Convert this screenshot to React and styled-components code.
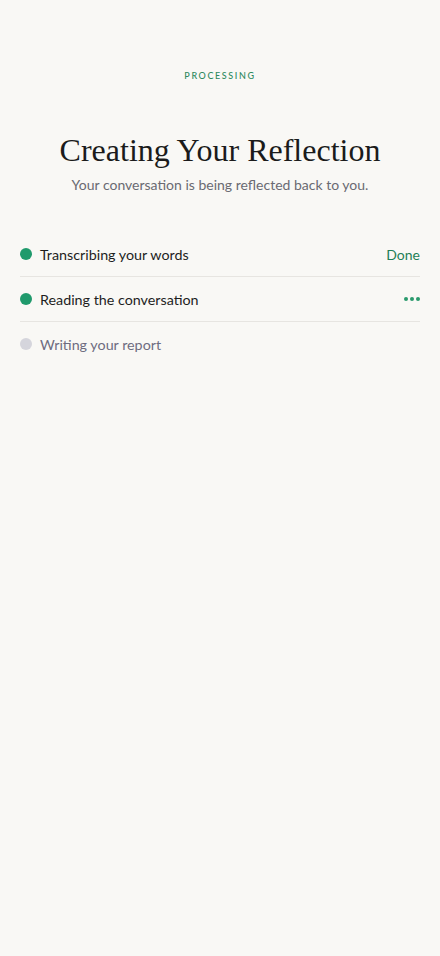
import React from "react";
import styled, { createGlobalStyle } from "styled-components";

const GlobalStyle = createGlobalStyle`
  html, body {
    margin: 0;
    padding: 0;
    background: #f9f8f5;
  }
  body {
    font-family: Lato, "Open Sans", sans-serif;
    -webkit-font-smoothing: antialiased;
  }
`;

const Page = styled.div`
  width: 440px;
  min-height: 956px;
  box-sizing: border-box;
  padding: 70px 20px 0;
  background: #f9f8f5;
`;

const Eyebrow = styled.div`
  text-align: center;
  font-size: 9px;
  line-height: 12px;
  letter-spacing: 1.6px;
  color: #2f8a60;
  font-weight: 500;
`;

const Title = styled.h1`
  margin: 49px 0 0;
  text-align: center;
  font-family: "Liberation Serif", "DejaVu Serif", serif;
  font-weight: 400;
  font-size: 32px;
  line-height: 38px;
  color: #1b1b1b;
`;

const Subtitle = styled.p`
  margin: 6px 0 0;
  text-align: center;
  font-size: 14px;
  line-height: 20px;
  color: #6a6a72;
`;

const Steps = styled.ul`
  list-style: none;
  margin: 37px 0 0;
  padding: 0;
`;

const Step = styled.li`
  display: flex;
  align-items: center;
  height: 45px;
  border-bottom: 1px solid ${(p) => (p.$last ? "transparent" : "#e7e5e1")};
  box-sizing: border-box;
`;

const Dot = styled.span`
  width: 12px;
  height: 12px;
  border-radius: 50%;
  background: ${(p) => (p.$active ? "#209a6c" : "#d5d5dc")};
  flex-shrink: 0;
`;

const Label = styled.span`
  margin-left: 8px;
  flex: 1;
  font-size: 14.3px;
  color: ${(p) => (p.$active ? "#1e1e1e" : "#6e6c80")};
`;

const Status = styled.span`
  font-size: 14px;
  color: #1f7f57;
`;

const Dots = styled.span`
  display: flex;
  gap: 2px;
`;

const Pip = styled.span`
  width: 4px;
  height: 4px;
  border-radius: 50%;
  background: #2a9a6c;
`;

export default function App() {
  return (
    <>
      <GlobalStyle />
      <Page>
        <Eyebrow>PROCESSING</Eyebrow>
        <Title>Creating Your Reflection</Title>
        <Subtitle>Your conversation is being reflected back to you.</Subtitle>
        <Steps>
          <Step>
            <Dot $active />
            <Label $active>Transcribing your words</Label>
            <Status>Done</Status>
          </Step>
          <Step>
            <Dot $active />
            <Label $active>Reading the conversation</Label>
            <Dots>
              <Pip />
              <Pip />
              <Pip />
            </Dots>
          </Step>
          <Step $last>
            <Dot />
            <Label>Writing your report</Label>
          </Step>
        </Steps>
      </Page>
    </>
  );
}
